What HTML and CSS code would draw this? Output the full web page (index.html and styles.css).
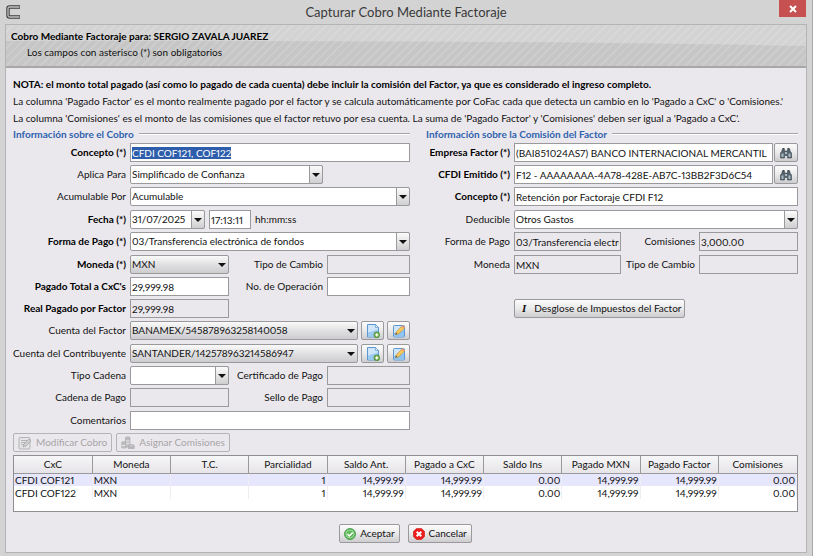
FILE: index.html
```html
<!DOCTYPE html>
<html lang="es">
<head>
<meta charset="utf-8">
<title>Capturar Cobro Mediante Factoraje</title>
<link rel="stylesheet" href="styles.css">
</head>
<body>
<svg class="sprite" aria-hidden="true">
  <symbol id="i-add" viewBox="0 0 14 14">
    <path d="M1.500 .5h8l3 3v9.500h-11z" fill="#cfe6fa" stroke="#5e96cf"/>
    <path d="M2 8.500l10-3V12.500H2z" fill="#9ccbf2"/>
    <path d="M9.500.5v3h3z" fill="#eef7ff" stroke="#5e96cf" stroke-width=".7"/>
    <circle cx="10.800" cy="10.800" r="2.900" fill="#6aab48" stroke="#4a8a2e" stroke-width=".7"/>
    <path d="M9.200 10.800h3.200M10.800 9.200v3.200" stroke="#fff" stroke-width="1.200"/>
  </symbol>
  <symbol id="i-edit" viewBox="0 0 14 14">
    <rect x="1.500" y="1.500" width="11" height="11.500" rx="1" fill="#cfe6fa" stroke="#5e96cf"/>
    <path d="M2 9l10-3v6.500H2z" fill="#8fc4f0"/>
    <path d="M3.500 10.500l1-3 6-6 2.300 2.300-6 6z" fill="#f6c95c" stroke="#b98432" stroke-width=".6"/>
    <path d="M10.500 1L13 3.500l-1.200 1.200-2.500-2.500z" fill="#e89a7a"/>
    <path d="M3.500 10.500l.5-1.800 1.300 1.300z" fill="#4a3a2a"/>
  </symbol>
  <symbol id="i-find" viewBox="0 0 12 12">
    <path d="M2 2.500h2.500v1.500h3V2.500H10V4l1.500 2v5h-4V8.500h-3V11h-4V6L2 4z" fill="#56646e" stroke="#34414a" stroke-width=".6"/>
    <path d="M2.500 1h2v1.500h-2zM7.500 1h2v1.500h-2z" fill="#34414a"/>
    <path d="M1.500 6.500h2v3.500h-2zM8.500 6.500h2v3.500h-2zM5 5h2v2H5z" fill="#a9b8c2"/>
  </symbol>
  <symbol id="i-form" viewBox="0 0 14 14">
    <rect x="1" y="1.500" width="11" height="11.500" rx="1" fill="#e4e3e5" stroke="#b4b3b5"/>
    <path d="M3 4.500h6M3 6.500h5M3 8.500h3" stroke="#b4b3b5"/>
    <path d="M5 11l1-3 5-5 2 2-5 5z" fill="#cfced0" stroke="#a9a8aa" stroke-width=".8"/>
  </symbol>
  <symbol id="i-coins" viewBox="0 0 14 14">
    <g fill="#c6c5c7" stroke="#a3a2a4" stroke-width=".6">
      <path d="M4.500 2v9h4.500V2z"/><ellipse cx="6.750" cy="2" rx="2.250" ry="1.200"/>
      <path d="M.8 6.500V12h4V6.500z"/><ellipse cx="2.800" cy="6.500" rx="2" ry="1"/>
      <path d="M7.200 10v2.500h6V10z"/><ellipse cx="10.200" cy="10" rx="3" ry="1.500"/>
    </g>
    <path d="M5 5h3.500M5 7.500h3.500M1.200 9.500h3" stroke="#ededef" stroke-width=".7"/>
  </symbol>
  <symbol id="i-ok" viewBox="0 0 12 12">
    <circle cx="6" cy="6" r="5.500" fill="#5cb85a" stroke="#3b9440" stroke-width=".8"/>
    <circle cx="6" cy="6" r="4" fill="none" stroke="#a9dca5" stroke-width=".9"/>
    <path d="M3.500 6l1.900 1.900L8.700 4.400" fill="none" stroke="#fff" stroke-width="1.500"/>
  </symbol>
  <symbol id="i-cancel" viewBox="0 0 12 12">
    <path d="M3.500.4h5l3.100 3.100v5l-3.100 3.100h-5L.4 8.500v-5z" fill="#ee1c1c" stroke="#c41414" stroke-width=".6"/>
    <path d="M3.700 3.700l4.600 4.600M8.300 3.700L3.700 8.300" stroke="#fff" stroke-width="2"/>
  </symbol>
</svg>

<div class="window">
  <header class="titlebar">
    <svg class="logo" viewBox="0 0 15 14" aria-hidden="true">
      <path d="M14 2H3.500Q2 2 2 3.500v7Q2 12 3.500 12H14" fill="none" stroke="#3c3c3c" stroke-width="3.400"/>
      <path d="M13.500 2H3.500Q2 2 2 3.500v7Q2 12 3.500 12h10" fill="none" stroke="#c4c4c4" stroke-width="1.300"/>
    </svg>
    <h1 class="title">Capturar Cobro Mediante Factoraje</h1>
    <button class="close" type="button" aria-label="Cerrar">
      <svg viewBox="0 0 8 8" aria-hidden="true"><path d="M1 1l6 6M7 1L1 7" stroke="#fff" stroke-width="2"/></svg>
    </button>
  </header>

  <main class="dialog">
    <div class="banner">
      <svg class="banner-art" viewBox="0 0 800 41" preserveAspectRatio="none" aria-hidden="true">
        <path d="M0 16Q500 15 800 21V41H0z" fill="#c6c6c6"/>
      </svg>
      <div class="banner-stripes"></div>
      <strong class="banner-title">Cobro Mediante Factoraje para: SERGIO ZAVALA JUAREZ</strong>
      <p class="banner-hint">Los campos con asterisco (*) son obligatorios</p>
    </div>

    <form class="content">
      <div class="notes">
        <p><strong>NOTA: el monto total pagado (así como lo pagado de cada cuenta) debe incluir la comisión del Factor, ya que es considerado el ingreso completo.</strong></p>
        <p>La columna 'Pagado Factor' es el monto realmente pagado por el factor y se calcula automáticamente por CoFac cada que detecta un cambio en lo 'Pagado a CxC' o 'Comisiones.'</p>
        <p>La columna 'Comisiones' es el monto de las comisiones que el factor retuvo por esa cuenta. La suma de 'Pagado Factor' y 'Comisiones' deben ser igual a 'Pagado a CxC'.</p>
      </div>

      <div class="columns">
        <section class="group">
          <h2 class="group-title">Información sobre el Cobro</h2>
          <div class="row">
            <label class="required" for="concepto">Concepto (*)</label>
            <input id="concepto" type="text" value="CFDI COF121, COF122">
          </div>
          <div class="row">
            <label for="aplica">Aplica Para</label>
            <span class="combo combo-medium"><select id="aplica"><option>Simplificado de Confianza</option></select></span>
          </div>
          <div class="row row-tall">
            <label for="acumulable">Acumulable Por</label>
            <span class="combo"><select id="acumulable"><option>Acumulable</option></select></span>
          </div>
          <div class="row">
            <label class="required" for="fecha">Fecha (*)</label>
            <div class="datetime">
              <span class="combo"><select id="fecha"><option>31/07/2025</option></select></span>
              <input id="hora" type="text" value="17:13:11">
              <label for="hora">hh:mm:ss</label>
            </div>
          </div>
          <div class="row row-tall">
            <label class="required" for="forma">Forma de Pago (*)</label>
            <span class="combo"><select id="forma"><option>03/Transferencia electrónica de fondos</option></select></span>
          </div>
          <div class="row row-pair">
            <label class="required" for="moneda">Moneda (*)</label>
            <span class="combo combo-flat"><select id="moneda"><option>MXN</option></select></span>
            <label for="cambio">Tipo de Cambio</label>
            <input id="cambio" type="text" readonly>
          </div>
          <div class="row row-pair">
            <label class="required" for="total">Pagado Total a CxC's</label>
            <input id="total" type="text" value="29,999.98">
            <label for="operacion">No. de Operación</label>
            <input id="operacion" type="text">
          </div>
          <div class="row row-pair">
            <label class="required" for="real">Real Pagado por Factor</label>
            <input id="real" type="text" value="29,999.98" readonly>
          </div>
          <div class="row row-tall">
            <label for="cuenta-factor">Cuenta del Factor</label>
            <div class="with-tools">
              <span class="combo combo-flat"><select id="cuenta-factor"><option>BANAMEX/545878963258140058</option></select></span>
              <button class="tool" type="button" aria-label="Agregar cuenta del factor"><svg class="icon"><use href="#i-add"/></svg></button>
              <button class="tool" type="button" aria-label="Editar cuenta del factor"><svg class="icon"><use href="#i-edit"/></svg></button>
            </div>
          </div>
          <div class="row">
            <label for="cuenta-contrib">Cuenta del Contribuyente</label>
            <div class="with-tools">
              <span class="combo combo-flat"><select id="cuenta-contrib"><option>SANTANDER/142578963214586947</option></select></span>
              <button class="tool" type="button" aria-label="Agregar cuenta del contribuyente"><svg class="icon"><use href="#i-add"/></svg></button>
              <button class="tool" type="button" aria-label="Editar cuenta del contribuyente"><svg class="icon"><use href="#i-edit"/></svg></button>
            </div>
          </div>
          <div class="row row-pair">
            <label for="tipo-cadena">Tipo Cadena</label>
            <span class="combo"><select id="tipo-cadena"><option></option></select></span>
            <label for="certificado">Certificado de Pago</label>
            <input id="certificado" type="text" readonly>
          </div>
          <div class="row row-pair row-tall">
            <label for="cadena">Cadena de Pago</label>
            <input id="cadena" type="text" readonly>
            <label for="sello">Sello de Pago</label>
            <input id="sello" type="text" readonly>
          </div>
          <div class="row">
            <label for="comentarios">Comentarios</label>
            <input id="comentarios" type="text">
          </div>
        </section>

        <section class="group group-factor">
          <h2 class="group-title">Información sobre la Comisión del Factor</h2>
          <div class="row">
            <label class="required" for="empresa">Empresa Factor (*)</label>
            <div class="with-tools with-search">
              <input id="empresa" type="text" value="(BAI851024AS7) BANCO INTERNACIONAL MERCANTIL">
              <button class="tool" type="button" aria-label="Buscar empresa"><svg class="icon"><use href="#i-find"/></svg></button>
            </div>
          </div>
          <div class="row">
            <label class="required" for="cfdi">CFDI Emitido (*)</label>
            <div class="with-tools with-search">
              <input id="cfdi" type="text" value="F12 - AAAAAAAA-4A78-428E-AB7C-13BB2F3D6C54">
              <button class="tool" type="button" aria-label="Buscar CFDI"><svg class="icon"><use href="#i-find"/></svg></button>
            </div>
          </div>
          <div class="row row-tall">
            <label class="required" for="concepto-factor">Concepto (*)</label>
            <input id="concepto-factor" type="text" value="Retención por Factoraje CFDI F12">
          </div>
          <div class="row">
            <label for="deducible">Deducible</label>
            <span class="combo"><select id="deducible"><option>Otros Gastos</option></select></span>
          </div>
          <div class="row row-pair row-tall">
            <label for="forma-factor">Forma de Pago</label>
            <input id="forma-factor" type="text" value="03/Transferencia electrónica de fondos" readonly>
            <label for="comisiones">Comisiones</label>
            <input id="comisiones" type="text" value="3,000.00" readonly>
          </div>
          <div class="row row-pair">
            <label for="moneda-factor">Moneda</label>
            <input id="moneda-factor" type="text" value="MXN" readonly>
            <label for="cambio-factor">Tipo de Cambio</label>
            <input id="cambio-factor" type="text" readonly>
          </div>
          <div class="row row-action">
            <button class="btn btn-taxes" type="button"><i class="glyph-i" aria-hidden="true">I</i>Desglose de Impuestos del Factor</button>
          </div>
        </section>
      </div>

      <div class="table-tools">
        <button class="btn" type="button" disabled><svg class="icon"><use href="#i-form"/></svg>Modificar Cobro</button>
        <button class="btn" type="button" disabled><svg class="icon"><use href="#i-coins"/></svg>Asignar Comisiones</button>
      </div>

      <div class="grid-box">
        <table class="grid">
          <thead>
            <tr><th>CxC</th><th>Moneda</th><th>T.C.</th><th>Parcialidad</th><th>Saldo Ant.</th><th>Pagado a CxC</th><th>Saldo Ins</th><th>Pagado MXN</th><th>Pagado Factor</th><th>Comisiones</th></tr>
          </thead>
          <tbody>
            <tr class="selected"><td>CFDI COF121</td><td>MXN</td><td></td><td>1</td><td>14,999.99</td><td>14,999.99</td><td>0.00</td><td>14,999.99</td><td>14,999.99</td><td>0.00</td></tr>
            <tr><td>CFDI COF122</td><td>MXN</td><td></td><td>1</td><td>14,999.99</td><td>14,999.99</td><td>0.00</td><td>14,999.99</td><td>14,999.99</td><td>0.00</td></tr>
          </tbody>
        </table>
      </div>

      <footer class="actions">
        <button class="btn" type="button"><svg class="icon"><use href="#i-ok"/></svg>Aceptar</button>
        <button class="btn" type="button"><svg class="icon"><use href="#i-cancel"/></svg>Cancelar</button>
      </footer>
    </form>
  </main>
</div>
<script src="main.js"></script>
</body>
</html>
```
FILE: styles.css
```css
*, *::before, *::after { box-sizing: border-box; }

body {
  margin: 0;
  background: #d3d3d3;
  color: #111;
  font: 10px/13px Lato, "Open Sans", sans-serif;
  font-variant-numeric: proportional-nums;
}

h1, h2, p { margin: 0; font-weight: normal; }

input, select, button {
  margin: 0;
  font: inherit;
  font-variant-numeric: inherit;
  color: inherit;
}

.sprite { display: none; }

.window {
  display: flex;
  flex-direction: column;
  min-height: 100vh;
  padding: 0 5px 3px;
  border-right: 1px solid #a8a8a8;
}

/* Title bar */
.titlebar {
  display: grid;
  grid-template-columns: 28px 1fr 28px;
  align-items: center;
  height: 24px;
}
.logo { width: 15px; height: 14px; margin-left: 1px; }
.title { font-size: 13px; line-height: 24px; text-align: center; color: #3a3a3a; }
.close {
  display: grid;
  place-items: center;
  align-self: start;
  width: 27px;
  height: 17px;
  padding: 0;
  border: 0;
  background: #c75050;
}
.close svg { width: 8px; height: 8px; }

/* Dialog */
.dialog {
  flex: 1;
  border: 1px solid #b4b4b4;
  background: #ebe8ed;
}

.banner {
  position: relative;
  height: 43px;
  padding: 3px 5px;
  border-bottom: 2px solid #a8a8a8;
  background: #d3d3d3;
  overflow: hidden;
}
.banner-art, .banner-stripes { position: absolute; inset: 0; width: 100%; height: 100%; }
.banner-stripes {
  background: repeating-linear-gradient(135deg, transparent 0 4px, rgba(255, 255, 255, .12) 4px 6px);
}
.banner-title, .banner-hint { position: relative; display: block; line-height: 16px; }
.banner-title { color: #000; }
.banner-hint { padding-left: 16px; }

.content { padding: 8px 8px 0 7px; }

.notes { line-height: 17px; }
strong { font-weight: bold; color: #000; }

.columns {
  display: grid;
  grid-template-columns: 397fr 372fr;
  gap: 16px;
}

.group-title {
  display: flex;
  align-items: center;
  gap: 5px;
  height: 16px;
  padding-bottom: 2px;
  font-size: 10px;
  line-height: 13px;
  font-weight: bold;
  color: #2f62ae;
}
.group-title::after {
  content: "";
  flex: 1;
  height: 2px;
  border-top: 1px solid #a4a3a6;
  border-bottom: 1px solid #fff;
}

/* Form rows */
.row {
  display: grid;
  grid-template-columns: 113px 1fr;
  column-gap: 4px;
  height: 19px;
  margin-bottom: 3px;
}
.row-tall { margin-bottom: 4px; }
.row-pair { grid-template-columns: 113px 99px 90px 1fr; }
.group-factor .row { grid-template-columns: 84px 1fr; }
.group-factor .row-pair { grid-template-columns: 84px 107px 70px 1fr; }
.group-factor .row-action { margin-top: 25px; }

.row label { line-height: 19px; text-align: right; white-space: nowrap; }
.required { font-weight: bold; color: #000; }

input, select {
  width: 100%;
  min-width: 0;
  height: 19px;
  padding: 0 1px;
  border: 1px solid #9a999c;
  border-radius: 0;
  outline: 0;
  background: #fff;
}
input:read-only { background: #ebe8ed; }
input::selection { background: #2d5dab; color: #fff; }

select { appearance: none; border-radius: 2px; }

.combo { display: grid; min-width: 0; }
.combo select, .combo::before, .combo::after { grid-area: 1 / 1; }
.combo::before {
  content: "";
  z-index: 1;
  justify-self: end;
  width: 14px;
  height: 19px;
  border: 1px solid #9a999c;
  border-radius: 0 2px 2px 0;
  background: linear-gradient(#fbfbfb, #cfcfd1);
  pointer-events: none;
}
.combo::after {
  content: "";
  z-index: 2;
  place-self: center end;
  margin-right: 3px;
  border: 4px solid transparent;
  border-top-color: #111;
  border-bottom: 0;
  pointer-events: none;
}
.combo-flat::before { display: none; }
.combo-flat select { background: linear-gradient(#fafafa, #dcdcde 60%, #cdcdd0); }
.combo-medium { width: 193px; }

.datetime { display: grid; grid-template-columns: 75px 42px auto 1fr; column-gap: 4px; }

.with-tools { display: grid; grid-template-columns: 1fr 23px 23px; column-gap: 3px; }
.with-search { grid-template-columns: 1fr 24px; column-gap: 1px; }

/* Buttons */
.tool, .btn {
  display: flex;
  align-items: center;
  justify-content: center;
  height: 19px;
  border: 1px solid #9a999c;
  border-radius: 2px;
  background: linear-gradient(#fcfcfc, #ececed 45%, #cdcdcf);
}
.tool { padding: 0; }
.btn { gap: 4px; padding: 0 4px; white-space: nowrap; }
.btn:disabled { color: #a6a5a8; border-color: #b4b3b6; background: #ebe8ed; }
.icon { width: 14px; height: 14px; }
.with-search .icon, .actions .icon { width: 12px; height: 12px; }
.btn-taxes { grid-column: 2; justify-self: start; gap: 8px; padding: 0 3px 0 7px; }
.glyph-i { font: italic bold 11px/13px "Liberation Serif", serif; }

/* Records */
.table-tools { display: flex; gap: 4px; margin-bottom: 3px; }

.grid-box {
  min-height: 57px;
  border: 1px solid #8f8e91;
  background: #fff;
}
.grid { width: 100%; border-collapse: collapse; table-layout: fixed; }
.grid th {
  height: 17px;
  padding: 0;
  border-right: 1px solid #9a999c;
  border-bottom: 1px solid #9a999c;
  background: linear-gradient(#f6f5f7, #e6e4e8);
  font-weight: normal;
}
.grid th:last-child { border-right: 0; }
.grid td {
  height: 13px;
  padding: 0 1px;
  border-right: 1px solid #efedf2;
  text-align: right;
  line-height: 12px;
}
.grid td:nth-child(-n+2) { text-align: left; }
.selected { background: #e6e6fd; }

.actions { display: flex; justify-content: center; gap: 8px; padding: 12px 0 8px; }
```
FILE: main.js
```
// Start with the concept selected so that typing replaces it.
const concept = document.getElementById('concepto');
concept.focus();
concept.select();
```
